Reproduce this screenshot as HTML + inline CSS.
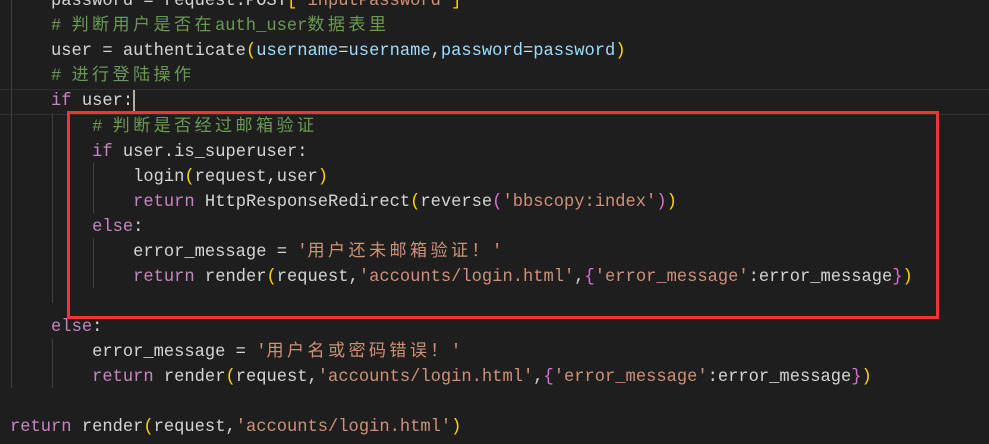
<!DOCTYPE html>
<html><head><meta charset="utf-8"><style>
body{margin:0;width:989px;height:444px;background:#1e1e1e;overflow:hidden;position:relative;font-family:"Liberation Mono","Noto Sans CJK SC",monospace;font-size:17.1px;color:#d4d4d4}
.l{position:absolute;left:10px;height:25px;line-height:25px;white-space:pre}
.k{color:#c586c0}.v{color:#9cdcfe}.c{color:#6a9955}.s{color:#ce9178}.f{color:#dcdcaa}.y{color:#ffd700}.p{color:#da70d6}
.z{letter-spacing:3.4px}
.g{position:absolute;width:1px;background:#404040}
</style></head><body>
<div style="position:absolute;left:0;top:89px;width:989px;height:24px;border-top:1px solid #2e2e2e;border-bottom:1px solid #2e2e2e"></div>
<div class="g" style="left:11px;top:0;height:388px"></div>
<div class="g" style="left:52px;top:113px;height:190px"></div>
<div class="g" style="left:52px;top:338px;height:50px"></div>
<div class="g" style="left:93px;top:163px;height:50px"></div>
<div class="g" style="left:93px;top:238px;height:50px"></div>
<div class="l" style="top:-11px">    password = request.POST<span class="y">[</span><span class="s">'inputPassword'</span><span class="y">]</span></div>
<div class="l c" style="top:14px">    # <span class="z">判断用户是否在</span>auth_user<span class="z">数据表里</span></div>
<div class="l" style="top:39px">    user = authenticate<span class="y">(</span><span class="v">username</span>=<span class="v">username</span>,<span class="v">password</span>=<span class="v">password</span><span class="y">)</span></div>
<div class="l c" style="top:64px">    # <span class="z">进行登陆操作</span></div>
<div class="l" style="top:89px">    <span class="k">if</span> user:</div>
<div style="position:absolute;left:133px;top:90px;width:2px;height:22px;background:#aeafad"></div>
<div class="l c" style="top:115px">        # <span class="z">判断是否经过邮箱验证</span></div>
<div class="l" style="top:140px">        <span class="k">if</span> user.is_superuser:</div>
<div class="l" style="top:165px">            login<span class="y">(</span>request,user<span class="y">)</span></div>
<div class="l" style="top:190px">            <span class="k">return</span> HttpResponseRedirect<span class="y">(</span>reverse<span class="p">(</span><span class="s">'bbscopy:index'</span><span class="p">)</span><span class="y">)</span></div>
<div class="l" style="top:215px">        <span class="k">else</span>:</div>
<div class="l" style="top:240px">            error_message = <span class="s">'<span class="z">用户还未邮箱验证！</span>'</span></div>
<div class="l" style="top:265px">            <span class="k">return</span> render<span class="y">(</span>request,<span class="s">'accounts/login.html'</span>,<span class="p">{</span><span class="s">'error_message'</span>:error_message<span class="p">}</span><span class="y">)</span></div>
<div class="l" style="top:315px">    <span class="k">else</span>:</div>
<div class="l" style="top:340px">        error_message = <span class="s">'<span class="z">用户名或密码错误！</span>'</span></div>
<div class="l" style="top:365px">        <span class="k">return</span> render<span class="y">(</span>request,<span class="s">'accounts/login.html'</span>,<span class="p">{</span><span class="s">'error_message'</span>:error_message<span class="p">}</span><span class="y">)</span></div>
<div class="l" style="top:415px"><span class="k">return</span> render<span class="y">(</span>request,<span class="s">'accounts/login.html'</span><span class="y">)</span></div>
<div style="position:absolute;left:67px;top:111px;width:866px;height:202px;border:3px solid #f03333"></div>
</body></html>
